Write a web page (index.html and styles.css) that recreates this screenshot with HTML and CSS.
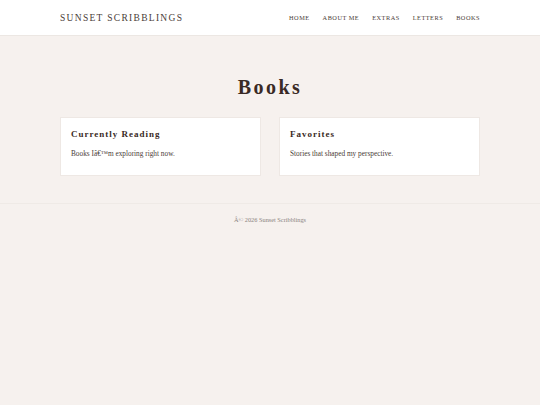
FILE: index.html
```html
<!DOCTYPE html>
<html>
<head>
<meta charset="utf-8">
<link rel="stylesheet" href="styles.css">
</head>
<body>
<header class="site-header">
  <div class="container header-inner">
    <div class="logo">SUNSET SCRIBBLINGS</div>
    <nav class="nav">
      <a>HOME</a>
      <a>ABOUT ME</a>
      <a>EXTRAS</a>
      <a>LETTERS</a>
      <a>BOOKS</a>
    </nav>
  </div>
</header>
<main class="container main">
  <h1 class="title">Books</h1>
  <div class="cards">
    <div class="card">
      <h2 class="card-title">Currently Reading</h2>
      <p class="card-text">Books Iâ€™m exploring right now.</p>
    </div>
    <div class="card">
      <h2 class="card-title">Favorites</h2>
      <p class="card-text">Stories that shaped my perspective.</p>
    </div>
  </div>
</main>
<footer class="footer">
  <p>Â© 2026 Sunset Scribblings</p>
</footer>
</body>
</html>
```
FILE: styles.css
```css
* { box-sizing: border-box; }
html, body { margin: 0; padding: 0; }
body {
  background: #f6f1ee;
  font-family: "Liberation Serif", serif;
  color: #4a3c37;
  height: 405px;
}
.container { width: 420px; margin: 0 auto; }
.site-header {
  background: #ffffff;
  border-bottom: 1px solid #ece7e3;
  height: 36px;
}
.header-inner {
  height: 35px;
  display: flex;
  align-items: center;
  justify-content: space-between;
}
.logo {
  font-size: 9.5px;
  letter-spacing: 1.3px;
  color: #4a3c37;
}
.nav { display: flex; gap: 13px; }
.nav a {
  font-size: 6.3px;
  letter-spacing: 0.5px;
  color: #4a3c37;
}
.main { padding-top: 40px; }
.title {
  margin: 0;
  text-align: center;
  font-size: 20px;
  letter-spacing: 2.5px;
  color: #3a2a25;
  font-weight: bold;
  line-height: 22px;
}
.cards {
  display: grid;
  grid-template-columns: 1fr 1fr;
  gap: 18px;
  margin-top: 19px;
}
.card {
  background: #ffffff;
  border: 1px solid #eee8e4;
  height: 59px;
  padding: 10px 10px;
}
.card-title {
  margin: 0;
  font-size: 9px;
  letter-spacing: 1px;
  font-weight: bold;
  color: #3a2a25;
  line-height: 12px;
}
.card-text {
  margin: 9px 0 0;
  font-size: 7.3px;
  color: #4a3c37;
  line-height: 10px;
}
.footer {
  margin-top: 27px;
  border-top: 1px solid #efeae6;
  text-align: center;
}
.footer p {
  margin: 11px 0 0;
  font-size: 6.3px;
  color: #8a8380;
  line-height: 10px;
}
```
